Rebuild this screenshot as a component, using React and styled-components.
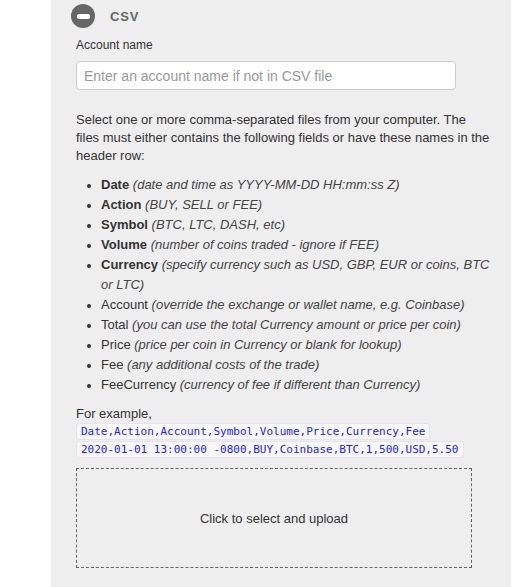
import React from "react";
import styled, { createGlobalStyle } from "styled-components";

const Global = createGlobalStyle`
  html, body { margin: 0; padding: 0; background: #fff; }
  body { font-family: "Liberation Sans", Arial, sans-serif; color: #333; }
`;

const Page = styled.div`
  display: flex;
  min-height: 587px;
`;

const Spacer = styled.div`
  width: 51px;
  flex: none;
`;

const Panel = styled.div`
  width: 460px;
  flex: none;
  background: #eee;
  min-height: 587px;
  box-sizing: border-box;
  padding: 4px 0 0 0;
`;

const Header = styled.div`
  display: flex;
  align-items: center;
  gap: 15px;
  padding-left: 20px;
  height: 24px;
`;

const ToggleIcon = styled.span`
  width: 24px;
  height: 24px;
  border-radius: 50%;
  background: #666;
  display: flex;
  align-items: center;
  justify-content: center;
  &::after {
    content: "";
    width: 13px;
    height: 5px;
    border-radius: 2px;
    background: #fff;
  }
`;

const Title = styled.span`
  font-size: 13px;
  font-weight: bold;
  color: #666;
  letter-spacing: 0.8px;
`;

const Body = styled.div`
  padding: 0 20px 0 25px;
`;

const Label = styled.div`
  font-size: 12px;
  line-height: 14px;
  margin-top: 10px;
  color: #333;
`;

const Input = styled.input`
  display: block;
  box-sizing: border-box;
  width: 380px;
  height: 29px;
  margin-top: 9px;
  padding: 0 7px;
  border: 1px solid #ccc;
  border-radius: 4px;
  background: #fff;
  font-family: "Liberation Sans", Arial, sans-serif;
  font-size: 14px;
  color: #333;
  outline: none;
  &::placeholder { color: #999; }
`;

const Paragraph = styled.p`
  margin: 21px 0 0 0;
  font-size: 13px;
  line-height: 18px;
`;

const List = styled.ul`
  margin: 10px 0 0 0;
  padding-left: 25px;
  font-size: 13px;
  line-height: 20px;
  li::marker { font-size: 12px; }
`;

const Name = styled.span`
  font-weight: ${(p) => (p.$bold ? "bold" : "normal")};
`;

const Note = styled.i`
  color: #444;
`;

const Example = styled.div`
  margin-top: 10px;
  font-size: 13px;
  line-height: 18px;
`;

const CodeStack = styled.div`
  display: flex;
  flex-direction: column;
  align-items: flex-start;
  gap: 1px;
  margin-top: 0;
`;

const Code = styled.code`
  display: block;
  font-family: "DejaVu Sans Mono", monospace;
  font-size: 11px;
  line-height: 15px;
  padding: 0 4px 0 4px;
  color: #2222ee;
  background: #f7f7f9;
  border: 1px solid #e4e4ea;
  border-radius: 3px;
`;

const Drop = styled.div`
  margin-top: 10px;
  width: 396px;
  height: 100px;
  box-sizing: border-box;
  border: 1px dashed #666;
  display: flex;
  align-items: center;
  justify-content: center;
  font-size: 13px;
  color: #333;
  cursor: pointer;
`;

const fields = [
  ["Date", true, "date and time as YYYY-MM-DD HH:mm:ss Z"],
  ["Action", true, "BUY, SELL or FEE"],
  ["Symbol", true, "BTC, LTC, DASH, etc"],
  ["Volume", true, "number of coins traded - ignore if FEE"],
  ["Currency", true, "specify currency such as USD, GBP, EUR or coins, BTC or LTC"],
  ["Account", false, "override the exchange or wallet name, e.g. Coinbase"],
  ["Total", false, "you can use the total Currency amount or price per coin"],
  ["Price", false, "price per coin in Currency or blank for lookup"],
  ["Fee", false, "any additional costs of the trade"],
  ["FeeCurrency", false, "currency of fee if different than Currency"],
];

export default function App() {
  return (
    <>
      <Global />
      <Page>
        <Spacer />
        <Panel>
          <Header>
            <ToggleIcon />
            <Title>CSV</Title>
          </Header>
          <Body>
            <Label>Account name</Label>
            <Input placeholder="Enter an account name if not in CSV file" />
            <Paragraph>
              Select one or more comma-separated files from your computer. The
              files must either contains the following fields or have these names
              in the header row:
            </Paragraph>
            <List>
              {fields.map(([name, bold, note]) => (
                <li key={name}>
                  <Name $bold={bold}>{name}</Name> <Note>({note})</Note>
                </li>
              ))}
            </List>
            <Example>For example,</Example>
            <CodeStack>
              <Code>Date,Action,Account,Symbol,Volume,Price,Currency,Fee</Code>
              <Code>2020-01-01 13:00:00 -0800,BUY,Coinbase,BTC,1,500,USD,5.50</Code>
            </CodeStack>
            <Drop>Click to select and upload</Drop>
          </Body>
        </Panel>
      </Page>
    </>
  );
}
